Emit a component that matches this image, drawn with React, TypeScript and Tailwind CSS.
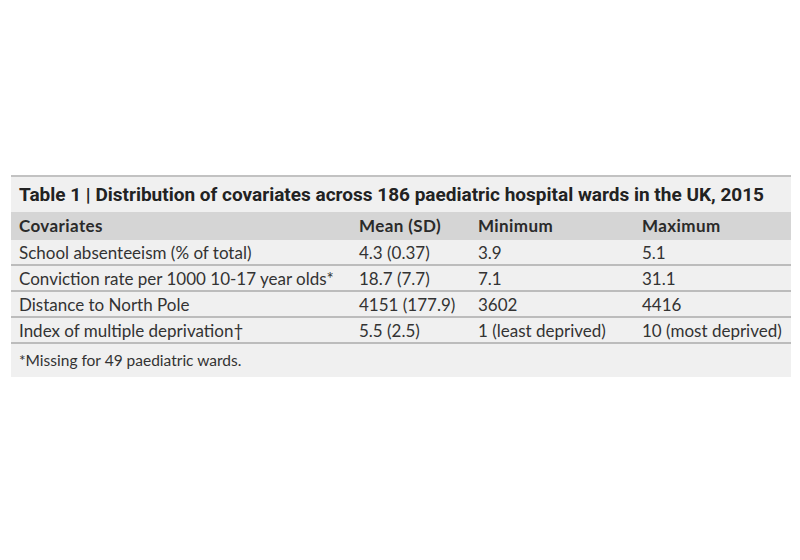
const rows = [
  ['School absenteeism (% of total)', '4.3 (0.37)', '3.9', '5.1'],
  ['Conviction rate per 1000 10-17 year olds*', '18.7 (7.7)', '7.1', '31.1'],
  ['Distance to North Pole', '4151 (177.9)', '3602', '4416'],
  ['Index of multiple deprivation†', '5.5 (2.5)', '1 (least deprived)', '10 (most deprived)'],
];

const cols = 'grid grid-cols-[340px_119px_164px_1fr]';

export default function App() {
  return (
    <div className="w-[800px] h-[560px] bg-white pt-[175px] pl-[11px] font-['Lato',sans-serif] text-[#333]">
      <div className="w-[780px] bg-[#f0f0f0] border-t-2 border-[#c2c2c2]">
        {/* title */}
        <div className="h-[35px] flex items-center px-2 pt-[2px] text-[19px] font-bold font-['Roboto',sans-serif] text-[#222] whitespace-nowrap">
          Table 1 | Distribution of covariates across 186 paediatric hospital wards in the UK, 2015
        </div>
        {/* header */}
        <div className={`${cols} h-[28px] items-center bg-[#d5d5d5] text-[17px] tracking-[0.4px] font-bold text-[#2a2a2a]`}>
          <div className="px-2">Covariates</div>
          <div className="px-2">Mean (SD)</div>
          <div className="px-2">Minimum</div>
          <div className="px-2">Maximum</div>
        </div>
        {rows.map((r) => (
          <div key={r[0]} className={`${cols} h-[26px] items-center border-b-2 border-[#bcbcbc] text-[17px]`}>
            {r.map((c, i) => (
              <div key={i} className="px-2 whitespace-nowrap">{c}</div>
            ))}
          </div>
        ))}
        <div className="h-[33px] flex items-center px-2 text-[15.5px]">*Missing for 49 paediatric wards.</div>
      </div>
    </div>
  );
}
